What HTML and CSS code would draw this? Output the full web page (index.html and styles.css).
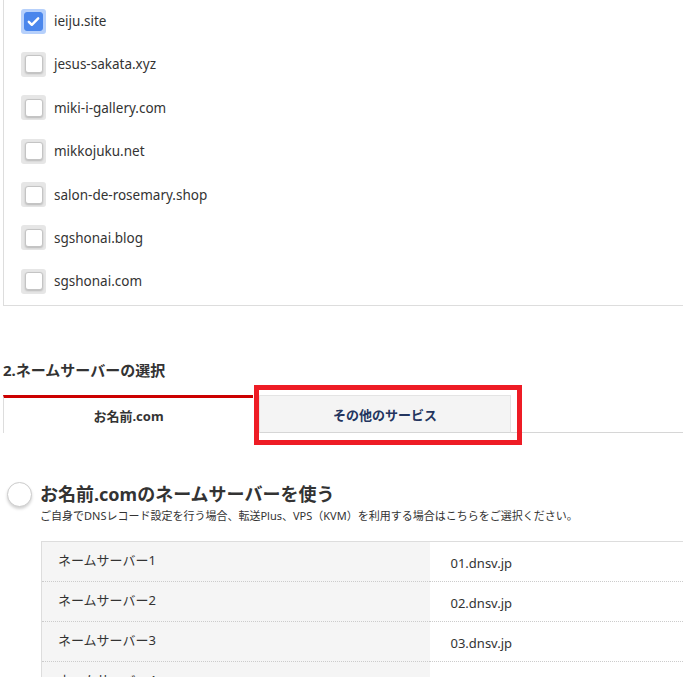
FILE: index.html
```html
<!DOCTYPE html>
<html lang="ja">
<head>
    <meta charset="UTF-8">
    <meta name="viewport" content="width=device-width, initial-scale=1.0">
    <title>ネームサーバーの設定</title>
    <link rel="stylesheet" href="styles.css">
</head>
<body>
    <div class="page">
        <div class="domain-box">
            <ul class="domain-list">
                <li class="domain-item">
                    <span class="check checked">
                        <span class="check-inner">
                            <svg viewBox="0 0 16 16" width="15" height="15"><path d="M3 8.4l3.2 3.1L13 4.6" fill="none" stroke="#fff" stroke-width="2.6" stroke-linecap="round" stroke-linejoin="round"/></svg>
                        </span>
                    </span>
                    <span class="domain-name">ieiju.site</span>
                </li>
                <li class="domain-item"><span class="check"><span class="check-inner"></span></span><span class="domain-name">jesus-sakata.xyz</span></li>
                <li class="domain-item"><span class="check"><span class="check-inner"></span></span><span class="domain-name">miki-i-gallery.com</span></li>
                <li class="domain-item"><span class="check"><span class="check-inner"></span></span><span class="domain-name">mikkojuku.net</span></li>
                <li class="domain-item"><span class="check"><span class="check-inner"></span></span><span class="domain-name">salon-de-rosemary.shop</span></li>
                <li class="domain-item"><span class="check"><span class="check-inner"></span></span><span class="domain-name">sgshonai.blog</span></li>
                <li class="domain-item"><span class="check"><span class="check-inner"></span></span><span class="domain-name">sgshonai.com</span></li>
            </ul>
        </div>

        <h2 class="section-title">2.ネームサーバーの選択</h2>

        <div class="tabs">
            <div class="tab active">お名前.com</div>
            <div class="tab other">
                その他のサービス
                <span class="highlight"></span>
            </div>
            <div class="tab-rest"></div>
        </div>

        <div class="ns-option">
            <div class="option-head">
                <span class="radio"></span>
                <div>
                    <h3 class="option-title">お名前.comのネームサーバーを使う</h3>
                    <p class="option-note">ご自身でDNSレコード設定を行う場合、転送Plus、VPS（KVM）を利用する場合はこちらをご選択ください。</p>
                </div>
            </div>

            <table class="ns-table">
                <tr><th>ネームサーバー1</th><td>01.dnsv.jp</td></tr>
                <tr><th>ネームサーバー2</th><td>02.dnsv.jp</td></tr>
                <tr><th>ネームサーバー3</th><td>03.dnsv.jp</td></tr>
                <tr><th>ネームサーバー4</th><td>04.dnsv.jp</td></tr>
            </table>
        </div>
    </div>
</body>
</html>
```

FILE: styles.css
```css
* { margin: 0; padding: 0; box-sizing: border-box; }
html, body { overflow: hidden; }
body {
    font-family: "Noto Sans", "Noto Sans CJK JP", sans-serif;
    color: #333;
    background: #fff;
    font-size: 13px;
}
.page { padding-left: 3px; width: 720px; }

.domain-box {
    border-left: 1px solid #ddd;
    border-bottom: 1px solid #ddd;
    padding: 8px 0 11px 17px;
}
.domain-list { list-style: none; display: flex; flex-direction: column; gap: 17.4px; }
.domain-item { display: flex; align-items: center; height: 26px; }
.domain-name { margin-left: 8px; font-size: 13.5px; color: #333; }

.check {
    width: 25px;
    height: 25px;
    border-radius: 3px;
    background: #e6e6e6;
    display: flex;
    align-items: center;
    justify-content: center;
}
.check-inner {
    width: 18px;
    height: 18px;
    border-radius: 3px;
    background: #fff;
    border: 1px solid #c4c4c4;
    box-shadow: 0 1px 2px rgba(0,0,0,0.2);
    display: flex;
    align-items: center;
    justify-content: center;
}
.check.checked { background: #b6d0fb; }
.check.checked .check-inner {
    width: 19px;
    height: 19px;
    background: #4a86ec;
    border-color: #4a86ec;
    box-shadow: none;
}

.section-title {
    font-size: 15px;
    font-weight: bold;
    color: #333;
    margin-top: 53px;
    line-height: 22px;
}

.tabs { display: flex; align-items: flex-end; margin-top: 14px; }
.tab {
    height: 38px;
    display: flex;
    align-items: center;
    justify-content: center;
    font-size: 13px;
    font-weight: bold;
}
.tab.active {
    width: 250px;
    border-top: 3px solid #cc0000;
    border-left: 1px solid #ddd;
    color: #333;
}
.tab.other {
    position: relative;
    width: 252px;
    margin-left: 6px;
    background: #f4f4f4;
    border: 1px solid #e4e4e4;
    border-bottom-color: #d6d6d6;
    color: #23355f;
}
.tab-rest { flex: 1; border-bottom: 1px solid #d6d6d6; }
.highlight {
    position: absolute;
    left: -6px;
    top: -11px;
    right: -12px;
    bottom: -13px;
    border: 5px solid #ee1c25;
}

.ns-option { margin-top: 49px; }
.option-head { display: flex; align-items: flex-start; }
.radio {
    width: 25px;
    height: 25px;
    border-radius: 50%;
    border: 1px solid #ccc;
    background: #fff;
    box-shadow: 0 2px 3px rgba(0,0,0,0.18);
    margin: 0 8px 0 4px;
    flex-shrink: 0;
}
.option-title { font-size: 18px; font-weight: bold; color: #333; line-height: 24px; }
.option-note { font-size: 11px; color: #333; margin-top: 2px; line-height: 16px; }

.ns-table {
    margin: 17px 0 0 38px;
    width: 690px;
    border-collapse: collapse;
    border-top: 1px solid #ddd;
    border-left: 1px solid #ddd;
}
.ns-table th, .ns-table td {
    height: 40px;
    font-size: 13px;
    font-weight: normal;
    text-align: left;
    border-bottom: 1px dotted #ccc;
    color: #333;
}
.ns-table th {
    width: 388px;
    background: #f5f5f5;
    padding: 0 16px 4px;
}
.ns-table td { padding: 2px 21px 0; }
```
